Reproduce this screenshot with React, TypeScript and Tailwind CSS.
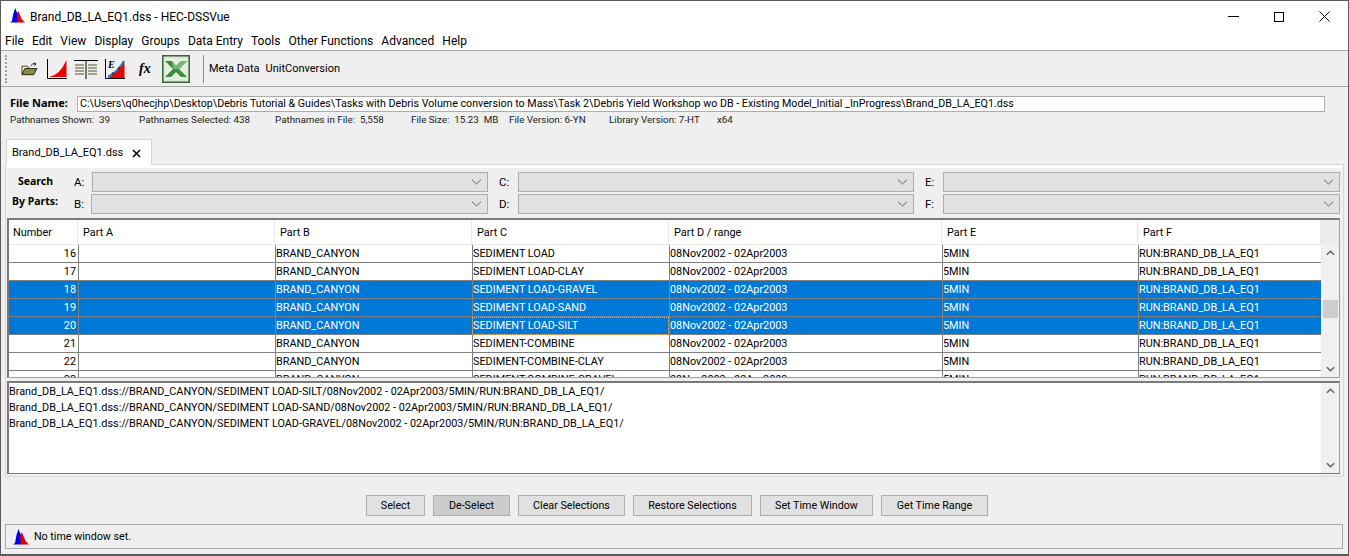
import React from "react";

function Logo({ className }: { className: string }) {
  return (
    <svg viewBox="0 0 16 16" className={className}>
      <path d="M0 15.5 L2 14 L3.5 6 L5.5 0 L7 4 L8.5 7 V15.5 Z" fill="#0000f0" />
      <path d="M7.5 15.5 V5 L9 3.5 L10.5 7 L12.5 12 L16 15.5 Z" fill="#e00000" />
    </svg>
  );
}

function Chevron() {
  return (
    <svg viewBox="0 0 10 6" className="w-[11px] h-[6px]">
      <path d="M0.5 0.8 L5 5 L9.5 0.8" fill="none" stroke="#666" strokeWidth="1" />
    </svg>
  );
}

function Scrollbar({ thumb }: { thumb?: boolean }) {
  return (
    <div className="w-[18px] shrink-0 bg-[#f0f0f0] flex flex-col items-center justify-between py-[5px] relative">
      <svg viewBox="0 0 10 6" className="w-[9px] h-[6px]">
        <path d="M1 5 L5 1 L9 5" fill="none" stroke="#606060" strokeWidth="1.6" />
      </svg>
      {thumb && <div className="absolute left-[2px] top-[55px] w-[15px] h-[18px] bg-[#cdcdcd]" />}
      <svg viewBox="0 0 10 6" className="w-[9px] h-[6px]">
        <path d="M1 1 L5 5 L9 1" fill="none" stroke="#606060" strokeWidth="1.6" />
      </svg>
    </div>
  );
}

function Combo({ label, w }: { label: string; w: string }) {
  return (
    <div className="flex items-center h-[20px]">
      <span className={`text-[11.5px] text-black shrink-0 pt-px ${w}`}>{label}</span>
      <div className="flex-1 h-[20px] bg-[#e1e1e1] border border-[#adadad] flex items-center justify-end pr-[5px]">
        <Chevron />
      </div>
    </div>
  );
}

const widths = ["w-[69px]", "w-[197px]", "w-[197px]", "w-[197px]", "w-[273px]", "w-[196px]", "w-[183px]"];
const headers = ["Number", "Part A", "Part B", "Part C", "Part D / range", "Part E", "Part F"];
const rows: [number, string, boolean][] = [
  [16, "SEDIMENT LOAD", false],
  [17, "SEDIMENT LOAD-CLAY", false],
  [18, "SEDIMENT LOAD-GRAVEL", true],
  [19, "SEDIMENT LOAD-SAND", true],
  [20, "SEDIMENT LOAD-SILT", true],
  [21, "SEDIMENT-COMBINE", false],
  [22, "SEDIMENT-COMBINE-CLAY", false],
  [23, "SEDIMENT-COMBINE-GRAVEL", false],
];

function Row({ n, c, sel }: { n: number; c: string; sel: boolean }) {
  const tone = sel ? "bg-[#0078d7] text-white" : "bg-white text-black";
  const cell = "h-[18px] border-b border-[#808080] text-[10.85px] leading-[18px] whitespace-nowrap overflow-hidden shrink-0";
  const focus = n === 20;
  return (
    <div className={`flex ${tone}`}>
      <div className={`${cell} ${widths[0]} text-right pr-[2px]`}>{n}</div>
      <div className={`${cell} ${widths[1]} border-l border-l-[#808080]`} />
      <div className={`${cell} ${widths[2]} border-l border-l-[#808080]`}>BRAND_CANYON</div>
      <div className={`${cell} ${widths[3]} border-l border-l-[#808080] ${focus ? "outline-1 -outline-offset-1 outline-dotted outline-[#e8b070]" : ""}`}>{c}</div>
      <div className={`${cell} ${widths[4]} border-l border-l-[#808080]`}>08Nov2002 - 02Apr2003</div>
      <div className={`${cell} ${widths[5]} border-l border-l-[#808080]`}>5MIN</div>
      <div className={`${cell} ${widths[6]} border-l border-l-[#808080]`}>RUN:BRAND_DB_LA_EQ1</div>
    </div>
  );
}

function Btn({ t, w, active }: { t: string; w: string; active?: boolean }) {
  return (
    <div className={`h-[21px] ${w} pt-px border border-[#adadad] ${active ? "bg-[#cccccc]" : "bg-[#e1e1e1]"} text-[10.7px] text-black flex items-center justify-center`}>
      {t}
    </div>
  );
}

export default function App() {
  return (
    <div className="font-['Roboto',sans-serif] w-[1349px] h-[556px] bg-[#efefef] border border-[#5a5a5a] border-b-2 flex flex-col overflow-hidden text-black">
      {/* Title bar */}
      <div className="h-[31px] bg-white flex items-center shrink-0 pl-[9px]">
        <Logo className="w-[15px] h-[17px] mb-[2px]" />
        <span className="ml-[5px] text-[12px]">Brand_DB_LA_EQ1.dss - HEC-DSSVue</span>
        <div className="ml-auto flex items-center mr-[18px]">
          <div className="w-[11px] h-px bg-black mr-[35px]" />
          <div className="w-[10px] h-[10px] border border-black mr-[35px]" />
          <svg viewBox="0 0 11 11" className="w-[11px] h-[11px]">
            <path d="M0.5 0.5 L10.5 10.5 M10.5 0.5 L0.5 10.5" stroke="#000" strokeWidth="1" />
          </svg>
        </div>
      </div>
      {/* Menu bar */}
      <div className="h-[19px] bg-white flex items-center shrink-0 pl-[4px] gap-[8.1px] text-[12px] border-b border-[#a8a8a8]">
        {["File", "Edit", "View", "Display", "Groups", "Data Entry", "Tools", "Other Functions", "Advanced", "Help"].map((m) => (
          <span key={m}>{m}</span>
        ))}
      </div>
      {/* Toolbar */}
      <div className="h-[36px] shrink-0 flex items-center border-b border-[#a8a8a8] pl-[4px]">
        <div className="w-[3px] h-[28px] border-l-2 border-dotted border-[#a0a0a0]" />
        <svg viewBox="0 0 18 14" className="w-[17px] h-[14px] ml-[13px]">
          <path d="M1 4 H7 L8 5.5 V12 H1 Z" fill="#fff7a0" stroke="#000" strokeWidth="0.8" />
          <path d="M1 13 L4 6.5 H17 L13.5 13 Z" fill="#8a8a40" stroke="#000" strokeWidth="0.8" />
          <path d="M10 4 Q12 0.8 15 1.5 M13.5 0.5 L16 1.7 L14 3.5" fill="none" stroke="#000" strokeWidth="0.9" />
        </svg>
        <svg viewBox="0 0 22 22" className="w-[22px] h-[22px] ml-[8px]">
          <path d="M1.5 1 V20.5 H21" fill="none" stroke="#000" strokeWidth="1" />
          <path d="M3 19 Q14 17 20.5 2 V19 Z" fill="#f00000" />
        </svg>
        <svg viewBox="0 0 24 20" className="w-[24px] h-[20px] ml-[6px]">
          <path d="M0 1.5 H24 M12 1.5 V20" stroke="#000" strokeWidth="1" />
          <path d="M1 6 H10 M1 9 H10 M1 12 H10 M1 15 H10 M14 6 H23 M14 9 H23 M14 12 H23 M14 15 H23" stroke="#55552a" strokeWidth="1" />
        </svg>
        <svg viewBox="0 0 22 22" className="w-[22px] h-[22px] ml-[6px]">
          <path d="M1.5 1 V20.5 H21" fill="none" stroke="#000" strokeWidth="1" />
          <path d="M5 20 L20.5 4 V20 Z" fill="#f00000" />
          <path d="M4 19 Q14 14 20 3" fill="none" stroke="#1878c8" strokeWidth="2" />
          <circle cx="9" cy="15.5" r="1.3" fill="#553300" />
          <circle cx="15" cy="10.5" r="1.3" fill="#553300" />
          <text x="4" y="10" fontSize="10" fontWeight="700" fontStyle="italic" fontFamily="Liberation Serif">E</text>
        </svg>
        <span className="ml-[13px] w-[16px] text-[14px] font-bold italic leading-none font-['Liberation_Serif',serif]">fx</span>
        <svg viewBox="0 0 28 28" className="w-[28px] h-[28px] ml-[7px]">
          <rect x="0.75" y="0.75" width="26.5" height="26.5" fill="#cfe0c8" stroke="#37663a" strokeWidth="1.5" />
          <rect x="2.5" y="2.5" width="23" height="23" fill="#e4eede" />
          <path d="M3 6 H10 L14 11 L19 6 H25 L17 14 L25 22 H19 L14 17 L9 22 H3 L11 14 Z" fill="#3a8c42" />
          <path d="M10 6 L14 11 L19 6 H25 L17 14 H11 Z" fill="#74b878" />
        </svg>
        <div className="w-px h-[28px] bg-[#8c8c8c] ml-[13px]" />
        <span className="ml-[5px] text-[11px] pt-px">Meta Data</span>
        <span className="ml-[6px] text-[11px] pt-px">UnitConversion</span>
      </div>
      {/* File name */}
      <div className="shrink-0 flex items-center h-[17px] mt-[8px] pl-[9px]">
        <span className="font-['Noto_Sans',sans-serif] text-[11px] font-bold w-[67px]">File Name:</span>
        <div className="w-[1248px] h-[16px] bg-white border border-[#adadad] text-[10.7px] leading-[13px] pl-[2px] whitespace-nowrap overflow-hidden">
          {"C:\\Users\\q0hecjhp\\Desktop\\Debris Tutorial & Guides\\Tasks with Debris Volume conversion to Mass\\Task 2\\Debris Yield Workshop wo DB - Existing Model_Initial _InProgress\\Brand_DB_LA_EQ1.dss"}
        </div>
      </div>
      {/* Stats */}
      <div className="shrink-0 flex items-start h-[12px] mt-[2px] pl-[9px] text-[9.8px] leading-[11px] text-[#222] whitespace-nowrap">
        <span className="w-[129px]">Pathnames Shown:&nbsp; 39</span>
        <span className="w-[136px]">Pathnames Selected: 438</span>
        <span className="w-[136px]">Pathnames in File:&nbsp; 5,558</span>
        <span className="w-[98px]">File Size:&nbsp; 15.23&nbsp; MB</span>
        <span className="w-[100px]">File Version: 6-YN</span>
        <span className="w-[108px]">Library Version: 7-HT</span>
        <span>x64</span>
      </div>
      {/* Tab */}
      <div className="shrink-0 flex mt-[13px] pl-[5px] h-[25px]">
        <div className="w-[146px] h-[26px] pt-px bg-white border border-[#d4d4d4] border-b-0 flex items-center pl-[5px] relative z-10">
          <span className="text-[11px]">Brand_DB_LA_EQ1.dss</span>
          <svg viewBox="0 0 9 9" className="w-[9px] h-[9px] ml-[9px]">
            <path d="M1 1 L8 8 M8 1 L1 8" stroke="#000" strokeWidth="1.6" />
          </svg>
        </div>
      </div>
      {/* Panel */}
      <div className="mx-[4px] w-[1339px] h-[313px] shrink-0 border border-[#d8d8d8] border-t-[#d4d4d4] bg-[#efefef] flex flex-col">
        <div className="h-[3px] bg-white shrink-0" />
        {/* Search */}
        <div className="flex h-[42px] mt-[4px] shrink-0 pl-[5px]">
          <div className="w-[57px] flex flex-col font-['Noto_Sans',sans-serif] text-[10.5px] font-bold shrink-0">
            <span className="h-[21px] pl-[7px] pt-[1px] leading-[16px]">Search</span>
            <span className="pl-[1px] leading-[16px]">By Parts:</span>
          </div>
          <div className="grid grid-cols-[420px_426px_426px] grid-rows-2 gap-y-[2px]">
            <Combo label="A:" w="w-[24px] pl-[6px]" />
            <Combo label="C:" w="w-[30px] pl-[11px]" />
            <Combo label="E:" w="w-[29px] pl-[11px]" />
            <Combo label="B:" w="w-[23px] pl-[6px]" />
            <Combo label="D:" w="w-[30px] pl-[11px]" />
            <Combo label="F:" w="w-[29px] pl-[11px]" />
          </div>
        </div>
        {/* Table */}
        <div className="mt-[4px] ml-[1px] w-[1333px] h-[160px] shrink-0 border-2 border-[#7a7a7a] border-b border-r border-r-[#a0a0a0] border-b-[#a0a0a0] flex overflow-hidden">
          <div className="w-[1312px] shrink-0 flex flex-col overflow-hidden">
            <div className="flex h-[25px] shrink-0">
              {headers.map((h, i) => (
                <div key={h} className={`${widths[i]} h-[25px] shrink-0 bg-white border-r border-b border-[#e8e8e8] text-[10.9px] leading-[25px] ${i === 0 ? "pl-[4px]" : "pl-[5px]"}`}>
                  {h}
                </div>
              ))}
            </div>
            {rows.map(([n, c, s]) => (
              <Row key={n} n={n} c={c} sel={s} />
            ))}
          </div>
          <div className="flex flex-col shrink-0 w-[18px]">
            <div className="h-[25px] shrink-0 bg-[#ececec]" />
            <div className="flex-1 flex min-h-0"><Scrollbar thumb /></div>
          </div>
        </div>
        {/* Text area */}
        <div className="mt-[3px] ml-[1px] w-[1333px] h-[93px] shrink-0 border-2 border-[#7a7a7a] border-b border-r border-r-[#a0a0a0] border-b-[#7a7a7a] bg-white flex">
          <div className="flex-1 pt-px text-[10.85px] leading-[16px] whitespace-nowrap">
            <div>Brand_DB_LA_EQ1.dss://BRAND_CANYON/SEDIMENT LOAD-SILT/08Nov2002 - 02Apr2003/5MIN/RUN:BRAND_DB_LA_EQ1/</div>
            <div>Brand_DB_LA_EQ1.dss://BRAND_CANYON/SEDIMENT LOAD-SAND/08Nov2002 - 02Apr2003/5MIN/RUN:BRAND_DB_LA_EQ1/</div>
            <div>Brand_DB_LA_EQ1.dss://BRAND_CANYON/SEDIMENT LOAD-GRAVEL/08Nov2002 - 02Apr2003/5MIN/RUN:BRAND_DB_LA_EQ1/</div>
          </div>
          <Scrollbar />
        </div>
      </div>
      {/* Buttons */}
      <div className="shrink-0 flex mt-[18px] pl-[365px] gap-2">
        <Btn t="Select" w="w-[59px]" />
        <Btn t="De-Select" w="w-[77px]" active />
        <Btn t="Clear Selections" w="w-[107px]" />
        <Btn t="Restore Selections" w="w-[119px]" />
        <Btn t="Set Time Window" w="w-[113px]" />
        <Btn t="Get Time Range" w="w-[107px]" />
      </div>
      {/* Status */}
      <div className="shrink-0 mt-[8px] ml-[4px] w-[1338px] h-[25px] border border-[#a8a8a8] flex items-center pl-[7px]">
        <Logo className="w-[16px] h-[16px]" />
        <span className="ml-[5px] pt-[2px] text-[10.7px]">No time window set.</span>
      </div>
    </div>
  );
}
